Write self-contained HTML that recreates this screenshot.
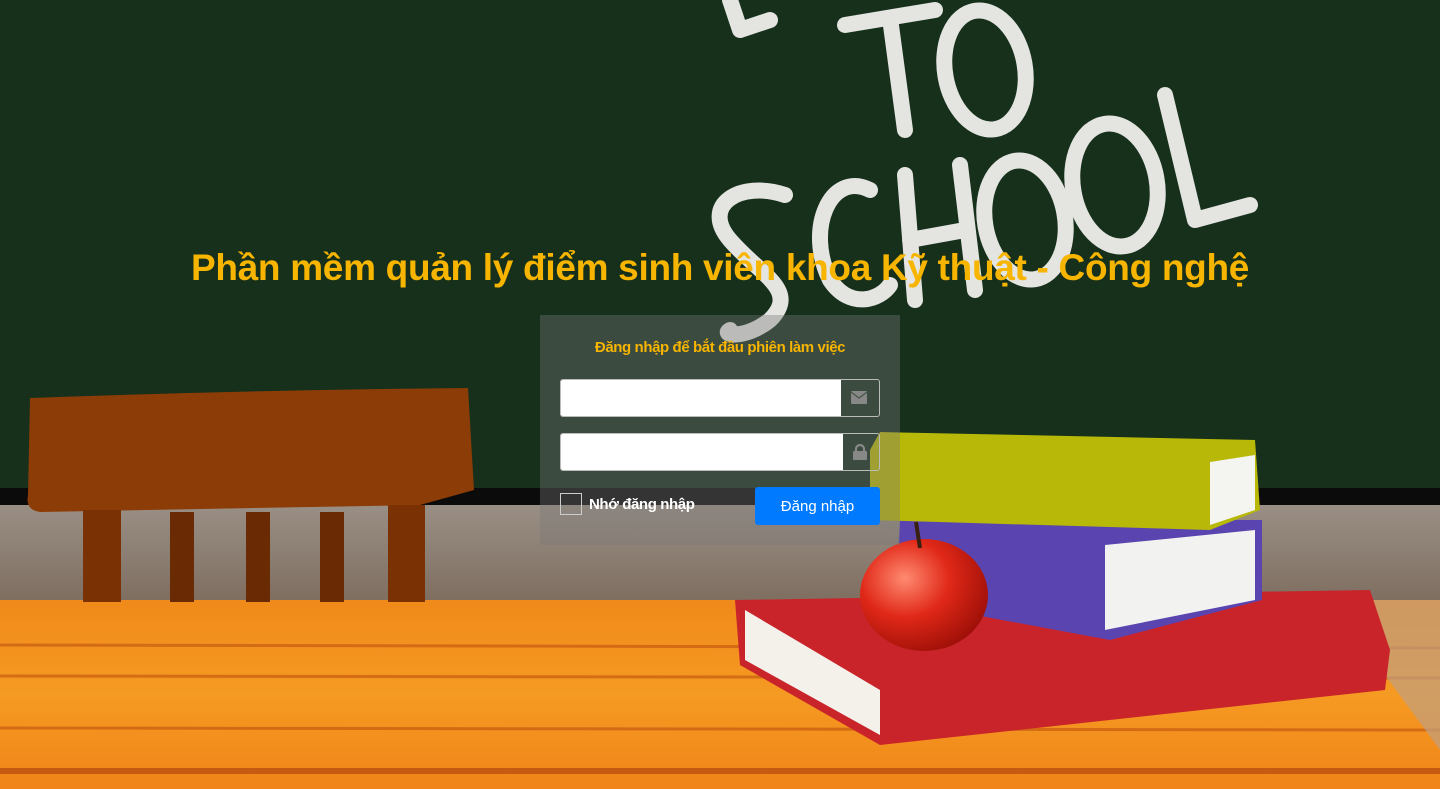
<!DOCTYPE html>
<html><head><meta charset="utf-8"><style>
html,body{margin:0;padding:0;width:1440px;height:789px;overflow:hidden;font-family:"Liberation Sans",sans-serif}
svg.bg{position:absolute;left:0;top:0}
.title{position:absolute;left:0;width:1440px;top:247px;text-align:center;color:#f7b500;font-weight:bold;font-size:37px;letter-spacing:-0.3px;white-space:nowrap}
.box{position:absolute;left:540px;top:315px;width:360px;height:230px;background:rgba(120,120,120,0.38)}
.sub{position:absolute;top:24px;left:0;width:360px;text-align:center;color:#f7b500;font-weight:bold;font-size:15px;letter-spacing:-0.4px}
.in{position:absolute;left:20px;width:320px;height:38px;border:1px solid #bbb;border-radius:3px;box-sizing:border-box;overflow:hidden}
.in .f{position:absolute;left:0;top:0;bottom:0;background:#fff}
.chk{position:absolute;left:20px;top:178px;width:22px;height:22px;border:1px solid #ccc;box-sizing:border-box}
.rem{position:absolute;left:49px;top:181px;color:#fff;font-weight:bold;font-size:15px;letter-spacing:-0.4px}
.btn{position:absolute;left:215px;top:172px;width:125px;height:38px;background:#007bff;border-radius:3px;color:#fff;font-size:15px;text-align:center;line-height:40px}
</style></head><body>
<svg class="bg" width="1440" height="789" viewBox="0 0 1440 789">
<defs>
<linearGradient id="wall" x1="0" y1="0" x2="0" y2="1"><stop offset="0" stop-color="#9a8f85"/><stop offset="1" stop-color="#7e6e60"/></linearGradient>
<linearGradient id="tab" x1="0" y1="0" x2="0" y2="1"><stop offset="0" stop-color="#f08a1a"/><stop offset="0.5" stop-color="#f59a22"/><stop offset="1" stop-color="#f08418"/></linearGradient>
<radialGradient id="ap" cx="0.35" cy="0.35" r="0.7"><stop offset="0" stop-color="#ff8a70"/><stop offset="0.5" stop-color="#e02818"/><stop offset="1" stop-color="#a01008"/></radialGradient>
</defs>
<rect width="1440" height="789" fill="#16301c"/>
<rect y="488" width="1440" height="18" fill="#0b0b0b"/>
<rect y="505" width="1440" height="97" fill="url(#wall)"/>
<rect y="600" width="1440" height="189" fill="url(#tab)"/>
<g stroke="#c0520e" stroke-width="3" opacity="0.6"><line x1="0" y1="645" x2="1440" y2="648"/><line x1="0" y1="676" x2="1440" y2="678"/><line x1="0" y1="728" x2="1440" y2="730"/></g>
<rect y="768" width="1440" height="6" fill="#c55a10"/>
<g fill="none" stroke="#e4e4e0" stroke-width="16" stroke-linecap="round" stroke-linejoin="round">
<path d="M730 0 L740 30 L770 20"/>
<path d="M845 25 L935 10 M890 18 L905 130"/>
<ellipse cx="985" cy="70" rx="40" ry="60" transform="rotate(-10 985 70)"/>
<path d="M785 195 C740 180 700 205 730 240 C760 275 800 290 770 320 C745 340 720 335 730 330"/>
<path d="M870 190 C830 170 805 230 830 280 C850 310 880 300 890 285"/>
<path d="M905 175 L915 300 M910 240 L965 230 M960 165 L975 290"/>
<ellipse cx="1025" cy="220" rx="40" ry="60" transform="rotate(-10 1025 220)"/>
<ellipse cx="1115" cy="185" rx="42" ry="62" transform="rotate(-10 1115 185)"/>
<path d="M1165 95 L1195 220 L1250 205"/>
</g>
<path d="M30 398 Q250 390 468 388 L474 490 L420 505 L40 512 Q25 510 28 495 Z" fill="#8c3c06"/>
<rect x="83" y="510" width="38" height="92" fill="#7a3204"/>
<rect x="170" y="512" width="24" height="90" fill="#6a2a04"/>
<rect x="246" y="512" width="24" height="90" fill="#6a2a04"/>
<rect x="320" y="512" width="24" height="90" fill="#6a2a04"/>
<rect x="388" y="505" width="37" height="97" fill="#7a3204"/>
<path d="M1330 600 L1440 600 L1440 750 Z" fill="#c0a080" opacity="0.7"/>
<path d="M735 600 L1370 590 L1390 650 L1385 690 L880 745 L740 665 Z" fill="#c8242a"/>
<path d="M745 610 L880 690 L880 735 L745 660 Z" fill="#f4f0ea"/>
<path d="M900 520 L1262 520 L1262 600 L1110 640 L895 600 Z" fill="#5a44b0"/>
<path d="M1105 545 L1255 530 L1255 600 L1105 630 Z" fill="#f2f2f0"/>
<path d="M880 432 L1255 440 L1260 510 L1210 530 L870 520 L870 450 Z" fill="#b8b808"/>
<path d="M1210 462 L1255 455 L1255 510 L1210 525 Z" fill="#f4f4f0"/>
<ellipse cx="924" cy="595" rx="64" ry="56" fill="url(#ap)"/>
<path d="M916 522 L920 548" stroke="#3a2010" stroke-width="4"/>
</svg>
<div class="title">Phần mềm quản lý điểm sinh viên khoa Kỹ thuật - Công nghệ</div>
<div class="box">
<div class="sub">Đăng nhập để bắt đầu phiên làm việc</div>
<div class="in" style="top:64px"><div class="f" style="width:280px"></div>
<svg style="position:absolute;left:290px;top:11px" width="16" height="13" viewBox="0 0 16 13"><rect width="16" height="13" rx="1" fill="#888"/><path d="M0 1 L8 7 L16 1" stroke="#4a5a4a" stroke-width="1.3" fill="none"/></svg></div>
<div class="in" style="top:118px"><div class="f" style="width:282px"></div>
<svg style="position:absolute;left:292px;top:10px" width="14" height="16" viewBox="0 0 14 16"><path d="M3 7 V5 a4 4 0 0 1 8 0 V7" stroke="#888" stroke-width="2.2" fill="none"/><rect y="7" width="14" height="9" rx="1" fill="#888"/></svg></div>
<div class="chk"></div>
<div class="rem">Nhớ đăng nhập</div>
<div class="btn">Đăng nhập</div>
</div>
</body></html>
